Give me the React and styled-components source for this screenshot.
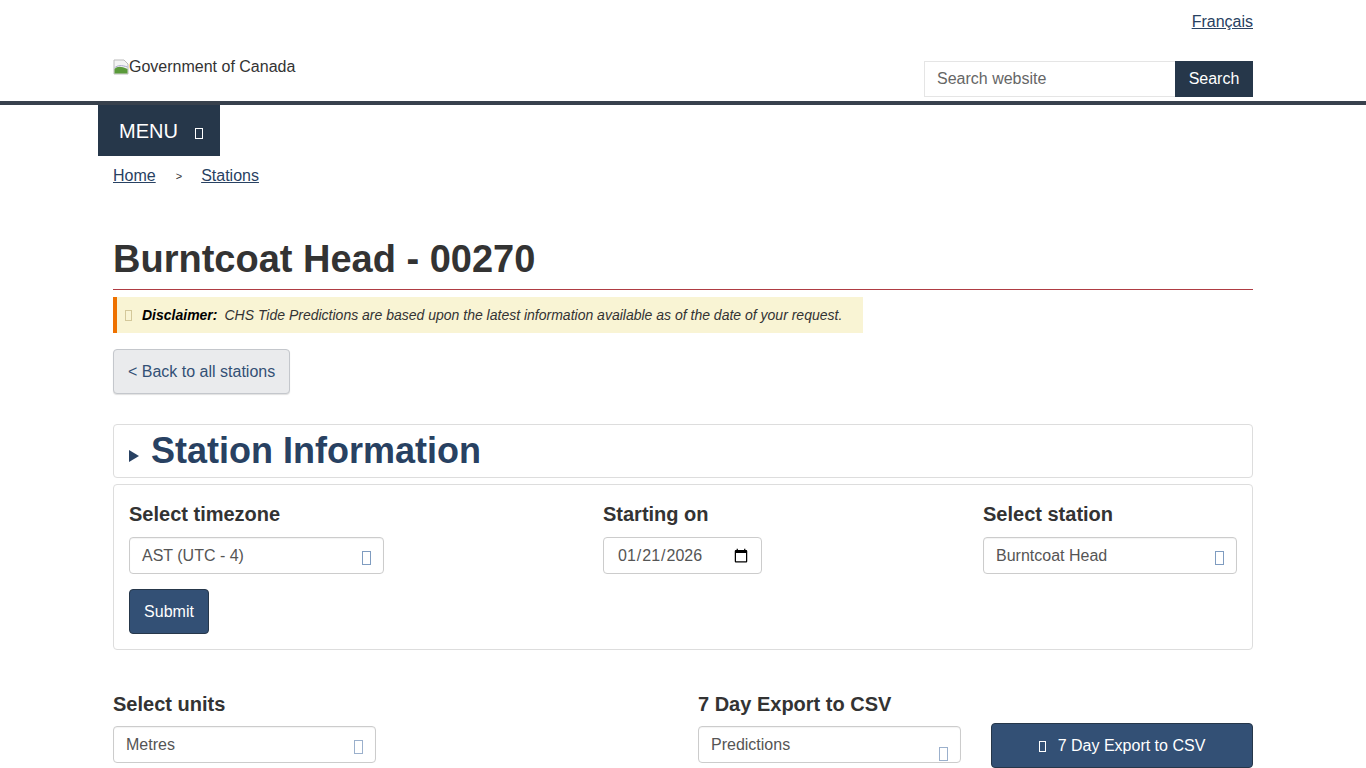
import React from 'react'
import styled, { createGlobalStyle } from 'styled-components'

const GlobalStyle = createGlobalStyle`
  body {
    margin: 0;
    background: #fff;
    color: #333;
    font-family: "Liberation Sans", Arial, sans-serif;
    font-size: 16px;
  }
`

const Container = styled.div`
  width: 1140px;
  margin: 0 auto;
`

const TopBar = styled(Container)`
  display: flex;
  justify-content: flex-end;
  height: 42px;
  align-items: center;
  padding-top: 1px;
  box-sizing: border-box;
`

const Link = styled.a`
  color: #284162;
  text-decoration: underline;
  font-size: 16px;
  cursor: pointer;
`

const HeaderBand = styled.div`
  border-bottom: 4px solid #38414d;
`

const BrandRow = styled(Container)`
  display: flex;
  justify-content: space-between;
  align-items: flex-start;
  padding: 19px 0 4px;
`

const Brand = styled.div`
  display: flex;
  align-items: center;
  margin-top: -3px;
  font-size: 16px;
  color: #333;
`

const SearchForm = styled.form`
  display: flex;
`

const SearchInput = styled.input`
  width: 251px;
  height: 36px;
  box-sizing: border-box;
  border: 1px solid #e5e5e5;
  border-right: none;
  padding: 0 12px;
  font-family: inherit;
  font-size: 16px;
  color: #555;
  &::placeholder { color: #666; }
`

const SearchButton = styled.button`
  width: 78px;
  height: 36px;
  border: none;
  background: #26374a;
  color: #fff;
  font-family: inherit;
  font-size: 16px;
`

const MenuRow = styled(Container)`
  display: flex;
`

const MenuButton = styled.button`
  margin-left: -15px;
  width: 122px;
  height: 51px;
  border: none;
  background: #26374a;
  color: #fff;
  font-family: inherit;
  font-size: 20px;
  display: flex;
  align-items: center;
  padding: 2px 0 0 21px;
`

const Tofu = styled.span`
  display: inline-block;
  box-sizing: border-box;
  width: ${p => p.$w || 8}px;
  height: ${p => p.$h || 12}px;
  border: 1px solid ${p => p.$color};
  margin-left: ${p => p.$ml || 0}px;
  margin-right: ${p => p.$mr || 0}px;
  position: relative;
  top: ${p => p.$top || 0}px;
  flex-shrink: 0;
`

const Breadcrumb = styled(Container)`
  display: flex;
  align-items: center;
  height: 40px;
  font-size: 16px;
`

const Sep = styled.span`
  font-size: 11px;
  color: #333;
  margin: 0 19px 0 20px;
`

const Title = styled.h1`
  margin: 42px 0 0;
  padding-bottom: 9px;
  border-bottom: 1px solid #af3c43;
  font-size: 38px;
  line-height: 42px;
  font-weight: bold;
  color: #333;
`

const Disclaimer = styled.div`
  margin-top: 7px;
  width: 750px;
  box-sizing: border-box;
  background: #f9f4d4;
  border-left: 4px solid #ee7100;
  padding: 10px 8px;
  font-size: 14px;
  line-height: 16px;
  font-style: italic;
  color: #333;
  display: flex;
  align-items: center;
  b { color: #000; margin-right: 7px; }
`

const BackButton = styled.button`
  margin-top: 16px;
  height: 45px;
  padding: 0 14px;
  border: 1px solid #c4c7cc;
  border-radius: 4px;
  background: #eaebed;
  color: #335075;
  font-family: inherit;
  font-size: 16px;
  box-shadow: 0 1px 1px rgba(0,0,0,0.12);
`

const Panel = styled.div`
  border: 1px solid #ddd;
  border-radius: 4px;
  margin-top: ${p => p.$mt}px;
`

const Summary = styled.div`
  height: 52px;
  display: flex;
  align-items: center;
  padding-left: 15px;
  color: #284162;
  font-size: 36px;
  font-weight: bold;
`

const Caret = styled.span`
  display: inline-block;
  width: 0;
  height: 0;
  border-top: 6px solid transparent;
  border-bottom: 6px solid transparent;
  border-left: 10px solid #284162;
  margin: 10px 12px 0 0;
`

const FormBody = styled.div`
  padding: 15px;
  display: grid;
  grid-template-columns: 474px 380px 254px;
`

const Field = styled.div`
  display: flex;
  flex-direction: column;
  align-items: flex-start;
`

const Label = styled.label`
  font-size: 20px;
  line-height: 28px;
  font-weight: bold;
  color: #333;
  margin-bottom: ${p => p.$mb ?? 9}px;
`

const Select = styled.div`
  width: ${p => p.$w || 255}px;
  height: 37px;
  box-sizing: border-box;
  border: 1px solid #ccc;
  border-radius: 4px;
  box-shadow: inset 0 1px 1px rgba(0,0,0,0.05);
  display: flex;
  align-items: center;
  justify-content: space-between;
  padding: 0 12px;
  font-size: 16px;
  color: #555;
  margin-top: ${p => p.$mt || 0}px;
`

const DateInput = styled.input`
  width: 159px;
  height: 37px;
  box-sizing: border-box;
  border: 1px solid #ccc;
  border-radius: 4px;
  padding: 0 10px 0 13px;
  font-family: "Liberation Sans", Arial, sans-serif;
  font-size: 16px;
  color: #555;
`

const PrimaryButton = styled.button`
  background: #335075;
  border: 1px solid #26374a;
  border-radius: 4px;
  color: #fff;
  font-family: inherit;
  font-size: 16px;
  height: 45px;
  width: ${p => p.$w}px;
  margin-top: ${p => p.$mt || 0}px;
  padding: 0 14px;
  display: flex;
  align-items: center;
  justify-content: center;
`

const Bottom = styled(Container)`
  margin-top: 40px;
  display: grid;
  grid-template-columns: 585px 555px;
`

const ExportRow = styled.div`
  display: flex;
  gap: 30px;
  align-items: flex-start;
`

const BrokenImage = () => (
  <svg width="16" height="16" viewBox="0 0 16 16">
    <path d="M1 1h10l4 4v10H1z" fill="#f4f4f4" stroke="#bbb" />
    <path d="M1.5 14.5V10c3-3 6-3 13 0v4.5z" fill="#5a9a3a" />
    <path d="M1.5 9c3-3 7-3 13-1" fill="none" stroke="#aac" />
  </svg>
)

export default function App() {
  return (
    <>
      <GlobalStyle />
      <TopBar>
        <Link>Français</Link>
      </TopBar>
      <HeaderBand>
        <BrandRow>
          <Brand>
            <BrokenImage />
            <span>Government of Canada</span>
          </Brand>
          <SearchForm onSubmit={e => e.preventDefault()}>
            <SearchInput placeholder="Search website" />
            <SearchButton type="submit">Search</SearchButton>
          </SearchForm>
        </BrandRow>
      </HeaderBand>
      <MenuRow>
        <MenuButton>
          MENU
          <Tofu $color="#fff" $w={8} $h={11} $ml={17} $top={2} />
        </MenuButton>
      </MenuRow>
      <Breadcrumb>
        <Link>Home</Link>
        <Sep>&gt;</Sep>
        <Link>Stations</Link>
      </Breadcrumb>
      <Container>
        <Title>Burntcoat Head - 00270</Title>
        <Disclaimer>
          <Tofu $color="#d4c89a" $w={7} $h={11} $mr={10} />
          <b>Disclaimer:</b>
          CHS Tide Predictions are based upon the latest information available as of the date of your request.
        </Disclaimer>
        <BackButton>&lt; Back to all stations</BackButton>
        <Panel $mt={30}>
          <Summary>
            <Caret />
            Station Information
          </Summary>
        </Panel>
        <Panel $mt={6}>
          <FormBody>
            <Field>
              <Label>Select timezone</Label>
              <Select $w={255}>
                AST (UTC - 4)
                <Tofu $color="#7f9cc0" $w={9} $h={14} $top={2} />
              </Select>
              <PrimaryButton $w={80} $mt={15}>Submit</PrimaryButton>
            </Field>
            <Field>
              <Label>Starting on</Label>
              <DateInput type="date" defaultValue="2026-01-21" />
            </Field>
            <Field>
              <Label>Select station</Label>
              <Select $w={254}>
                Burntcoat Head
                <Tofu $color="#7f9cc0" $w={9} $h={14} $top={2} />
              </Select>
            </Field>
          </FormBody>
        </Panel>
      </Container>
      <Bottom>
        <Field>
          <Label $mb={8}>Select units</Label>
          <Select $w={263}>
            Metres
            <Tofu $color="#9bb0cc" $w={9} $h={14} $top={2} />
          </Select>
        </Field>
        <Field>
          <Label $mb={5}>7 Day Export to CSV</Label>
          <ExportRow>
            <Select $w={263} $mt={3}>
              Predictions
              <Tofu $color="#9bb0cc" $w={9} $h={14} $top={9} />
            </Select>
            <PrimaryButton $w={262}>
              <Tofu $color="#fff" $w={7} $h={11} $mr={12} $top={1} />
              7 Day Export to CSV
            </PrimaryButton>
          </ExportRow>
        </Field>
      </Bottom>
    </>
  )
}
